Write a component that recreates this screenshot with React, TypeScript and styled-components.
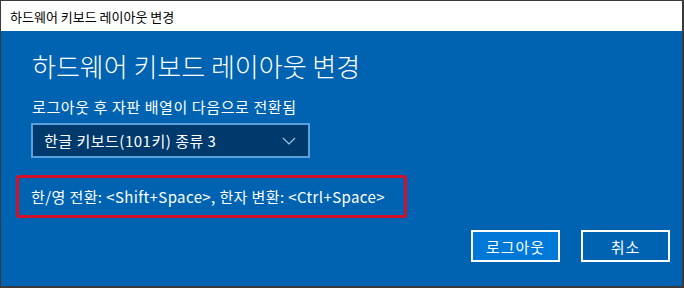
import styled, { createGlobalStyle } from "styled-components";

const GlobalStyle = createGlobalStyle`
  html, body {
    margin: 0;
    padding: 0;
    background: #ffffff;
  }
  body {
    font-family: "Noto Sans CJK KR", "Noto Sans", sans-serif;
  }
`;

const Window = styled.div`
  width: 684px;
  height: 288px;
  box-sizing: border-box;
  border: 1px solid #3a3a3a;
  border-right-width: 2px;
  border-bottom-width: 2px;
  display: flex;
  flex-direction: column;
  background: #0063b1;
  overflow: hidden;
`;

const TitleBar = styled.div`
  height: 30px;
  flex: none;
  background: #ffffff;
  display: flex;
  align-items: center;
  padding-left: 9px;
  font-size: 13px;
  color: #000000;
`;

const Content = styled.div`
  flex: 1;
  display: flex;
  flex-direction: column;
  padding: 19px 12px 0 15px;
  color: #ffffff;
`;

const Heading = styled.h1`
  margin: 0 0 0 16px;
  font-size: 26px;
  font-weight: 300;
  line-height: 32px;
`;

const Label = styled.div`
  margin: 15px 0 0 16px;
  font-size: 15px;
  letter-spacing: 0.6px;
  line-height: 20px;
`;

const Select = styled.div`
  margin: 6px 0 0 15px;
  width: 279px;
  height: 35px;
  box-sizing: border-box;
  border: 2px solid #5d9fdb;
  background: #003a6c;
  display: flex;
  align-items: center;
  justify-content: space-between;
  padding: 0 12px 0 11px;
  font-size: 15px;
  letter-spacing: 0.5px;
`;

const Chevron = styled.svg`
  width: 14px;
  height: 8px;
  display: block;
`;

const Notice = styled.div`
  margin-top: 17px;
  width: 391px;
  height: 43px;
  box-sizing: border-box;
  border: 3px solid #d2102a;
  border-radius: 3px;
  display: flex;
  align-items: center;
  padding-left: 12px;
  font-size: 15px;
  letter-spacing: 0.4px;
`;

const Buttons = styled.div`
  margin-top: 12px;
  display: flex;
  justify-content: flex-end;
  gap: 21px;
`;

const Button = styled.div<{ primary?: boolean }>`
  width: 89px;
  height: 32px;
  box-sizing: border-box;
  border: 2px solid #ffffff;
  background: ${({ primary }) => (primary ? "#0078d7" : "#0063b1")};
  display: flex;
  align-items: center;
  justify-content: center;
  font-size: 15px;
  letter-spacing: 1px;
  color: #ffffff;
`;

const App = () => {
  return (
    <>
      <GlobalStyle />
      <Window>
        <TitleBar>하드웨어 키보드 레이아웃 변경</TitleBar>
        <Content>
          <Heading>하드웨어 키보드 레이아웃 변경</Heading>
          <Label>로그아웃 후 자판 배열이 다음으로 전환됨</Label>
          <Select>
            <span>한글 키보드(101키) 종류 3</span>
            <Chevron viewBox="0 0 14 8">
              <path d="M1 1 L7 7 L13 1" fill="none" stroke="#9cc4ea" strokeWidth="1.2" />
            </Chevron>
          </Select>
          <Notice>한/영 전환: &lt;Shift+Space&gt;, 한자 변환: &lt;Ctrl+Space&gt;</Notice>
          <Buttons>
            <Button primary>로그아웃</Button>
            <Button>취소</Button>
          </Buttons>
        </Content>
      </Window>
    </>
  );
};

export default App;
